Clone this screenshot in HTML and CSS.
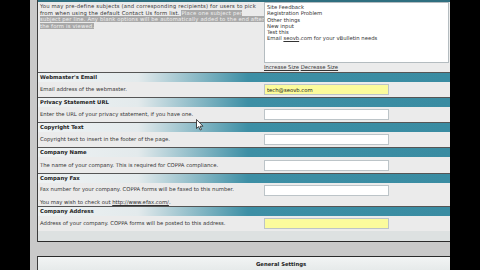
FILE: index.html
```html
<!DOCTYPE html>
<html>
<head>
<meta charset="utf-8">
<link rel="stylesheet" href="styles.css">
</head>
<body>
<div class="screen">
  <div class="frame">
    <div class="panel">
      <div class="topline"></div>
      <div class="row first">
        <div class="desc">You may pre-define subjects (and corresponding recipients) for users to pick<br>from when using the default Contact Us form list. <span class="sel">Place one subject per</span><br><span class="sel">subject per line. Any blank options will be automatically added to the end after</span><br><span class="sel">the form is viewed.</span></div>
        <div class="ctrl">
          <div class="textarea">Site Feedback<br>Registration Problem<br>Other things<br>New input<br>Test this<br>Email <u>seovb</u>.com for your vBulletin needs</div>
          <div class="sizelinks"><a href="#">Increase Size</a> <a href="#">Decrease Size</a></div>
        </div>
      </div>
      <div class="head">Webmaster's Email</div>
      <div class="row">
        <div class="desc">Email address of the webmaster.</div>
        <div class="ctrl"><input class="field yellow" type="text" value="tech@seovb.com"></div>
      </div>
      <div class="head">Privacy Statement URL</div>
      <div class="row">
        <div class="desc">Enter the URL of your privacy statement, if you have one.</div>
        <div class="ctrl"><input class="field" type="text" value=""></div>
      </div>
      <div class="head">Copyright Text</div>
      <div class="row">
        <div class="desc">Copyright text to insert in the footer of the page.</div>
        <div class="ctrl"><input class="field" type="text" value=""></div>
      </div>
      <div class="head">Company Name</div>
      <div class="row r16">
        <div class="desc">The name of your company. This is required for COPPA compliance.</div>
        <div class="ctrl"><input class="field" type="text" value=""></div>
      </div>
      <div class="head">Company Fax</div>
      <div class="row tall">
        <div class="desc">Fax number for your company. COPPA forms will be faxed to this number.<br><br>You may wish to check out <a href="#">http://www.efax.com/</a>.</div>
        <div class="ctrl"><input class="field" type="text" value=""></div>
      </div>
      <div class="head">Company Address</div>
      <div class="row">
        <div class="desc">Address of your company. COPPA forms will be posted to this address.</div>
        <div class="ctrl"><input class="field yellow" type="text" value=""></div>
      </div>
      <div class="foot"></div>
    </div>
    <div class="gap"></div>
    <div class="panel panel2">
      <div class="gs">General Settings</div>
    </div>
  </div>
</div>
<svg class="cursor" width="8" height="12" viewBox="0 0 8 12"><path d="M0.5 0.5 L0.5 9.5 L2.6 7.6 L4.2 11 L5.5 10.4 L4 7.2 L7 7.2 Z" fill="#fff" stroke="#222" stroke-width="0.8"/></svg>
</body>
</html>
```
FILE: styles.css
```css
html, body {
  margin: 0;
  padding: 0;
  background: #000;
  width: 480px;
  height: 270px;
  overflow: hidden;
  position: relative;
}
.screen {
  display: flex;
  height: 270px;
  padding-left: 30px;
}
.frame {
  width: 420px;
  background: #c9c9c9;
  padding-left: 7px;
  box-sizing: border-box;
  display: flex;
  flex-direction: column;
}
.panel {
  border-left: 1px solid #3c3c3c;
  background: #ebebeb;
  font-family: "DejaVu Sans", Verdana, sans-serif;
  font-size: 5.3px;
  color: #333;
}
.topline {
  height: 2px;
  background: #2f6f80;
}
.row {
  display: grid;
  grid-template-columns: 226px 1fr;
  align-items: center;
  height: 15px;
  background: #ebebeb;
}
.row.r16 { height: 16px; }
.row.first {
  height: 70px;
  align-items: start;
}
.row.tall {
  height: 23px;
  align-items: start;
}
.row.tall .desc { padding-top: 3px; line-height: 6.4px; }
.row.tall .ctrl { padding-top: 2px; }
.desc {
  padding-left: 2px;
  line-height: 6.5px;
  white-space: nowrap;
}
.row.first .desc {
  padding-top: 1px;
  line-height: 6.5px;
  letter-spacing: 0.18px;
  position: relative;
  z-index: 0;
}
.sel {
  background: #a9a9a9;
  color: #f0f0f0;
}
.ctrl {
  display: flex;
  flex-direction: column;
  position: relative;
  z-index: 1;
}
.textarea {
  height: 61px;
  width: 185px;
  box-sizing: border-box;
  background: #fff;
  border: 1px solid #b4bcc0;
  padding: 1px 2px;
  line-height: 6.3px;
  color: #333;
}
.sizelinks {
  margin-top: 1px;
  line-height: 6px;
}
.sizelinks a, .desc a {
  color: #333;
  text-decoration: underline;
}
.field {
  width: 125px;
  height: 11px;
  box-sizing: border-box;
  margin: 0;
  border: 1px solid #bcc4c8;
  background: #fff;
  font-family: "DejaVu Sans", Verdana, sans-serif;
  font-size: 5.3px;
  color: #222;
  padding: 0 2px;
  outline: none;
}
.field.yellow {
  background: #fbfb9c;
}
.head {
  height: 10px;
  box-sizing: border-box;
  border-top: 1px solid #555;
  background: linear-gradient(to right, #eef2f3 0, #e3eaec 100px, #3d8fa5 210px, #3a8ca2 100%);
  font-weight: bold;
  color: #1c1c1c;
  padding-left: 2px;
  line-height: 9px;
}
.foot {
  height: 10px;
  background: #dde1e1;
  border-bottom: 1px solid #2a2a2a;
}
.gap {
  height: 14px;
}
.panel2 {
  border-top: 1px solid #2a2a2a;
  flex: 1;
  background: linear-gradient(#f2f4f4, #e6eaea);
}
.gs {
  font-weight: bold;
  padding-left: 218px;
  padding-top: 4px;
  color: #222;
}
.cursor {
  position: absolute;
  left: 196px;
  top: 119px;
}
```
